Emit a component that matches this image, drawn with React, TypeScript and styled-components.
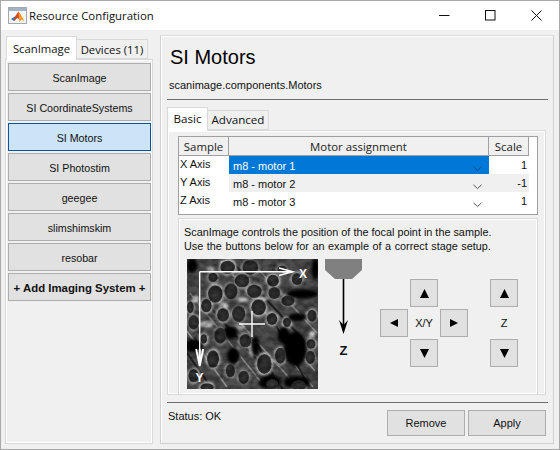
import React from "react";
import styled, { createGlobalStyle } from "styled-components";

const Global = createGlobalStyle`
  html, body { margin: 0; padding: 0; background: #f0f0f0; }
  * { box-sizing: border-box; }
`;

const Window = styled.div`
  width: 560px; height: 450px; display: flex; flex-direction: column;
  border: 1px solid #a9a9a9; background: #f0f0f0; overflow: hidden;
  font-family: "Liberation Sans", Arial, sans-serif; font-size: 11px; color: #000;
`;
const TitleBar = styled.div`
  height: 29px; flex: none; background: #fff; display: flex; align-items: center; padding-left: 7px;
`;
const TitleText = styled.div`
  font-family: "Open Sans", sans-serif; font-size: 11.4px; margin-left: 2px; flex: 1; color: #111;
`;
const WinButton = styled.div`
  width: 46px; height: 29px; display: flex; align-items: center; justify-content: center;
`;
const Main = styled.div`
  flex: 1; display: flex; padding: 5px 5px 5px 4px; min-height: 0; gap: 7px;
`;
const LeftColumn = styled.div`
  width: 148px; flex: none; display: flex; flex-direction: column;
`;
const TabRow = styled.div`
  display: flex; align-items: flex-end; height: 24px; flex: none; padding-left: 1px; position: relative; z-index: 1;
`;
const Tab = styled.div<{ $active?: boolean; $w: number }>`
  width: ${p => p.$w}px; height: ${p => (p.$active ? 24 : 20)}px;
  background: ${p => (p.$active ? "#fff" : "#f0f0f0")};
  border: 1px solid #d9d9d9; border-bottom: ${p => (p.$active ? "none" : "1px solid #d9d9d9")};
  margin-left: ${p => (p.$active ? 0 : -1)}px; margin-bottom: ${p => (p.$active ? -1 : 0)}px;
  z-index: ${p => (p.$active ? 2 : 1)};
  font-family: "Open Sans", sans-serif; font-size: 11.3px; color: #111;
  display: flex; align-items: center; justify-content: center; white-space: nowrap;
`;
const InnerTab = styled(Tab)`
  padding-bottom: 2px; font-size: 11.6px;
`;
const LeftPanel = styled.div`
  flex: 1; border: 1px solid #d9d9d9; box-shadow: inset 0 0 0 1px #fff; padding: 3px 1px 0 2px;
  display: flex; flex-direction: column; gap: 2px;
`;
const NavButton = styled.div<{ $active?: boolean; $bold?: boolean }>`
  height: 28px; flex: none; padding-top: 2px;
  background: ${p => (p.$active ? "#cce4f7" : "#e1e1e1")};
  border: 1px solid ${p => (p.$active ? "#005499" : "#adadad")};
  display: flex; align-items: center; justify-content: center;
  font-weight: ${p => (p.$bold ? 700 : 400)};
  font-size: ${p => (p.$bold ? "11.4px" : "10.7px")};
  color: #111; white-space: nowrap;
`;
const RightPanel = styled.div`
  flex: 1; border: 1px solid #d0d0d0; border-top-color: #dcdcdc; box-shadow: inset 1px 1px 0 #fff;
  padding: 0 5px 0 6px; display: flex; flex-direction: column; min-width: 0;
`;
const Title = styled.div`
  font-family: "Liberation Sans", Arial, sans-serif; font-weight: 400; font-size: 20px; line-height: 24px;
  margin: 9px 0 0 3px; color: #000;
`;
const Subtitle = styled.div`
  font-size: 11px; line-height: 14px; margin: 9px 0 0 2px; color: #111;
`;
const Rule = styled.div`
  height: 1px; background: #6e6e6e; flex: none; margin-top: 7px;
`;
const InnerTabs = styled.div`
  display: flex; align-items: flex-end; height: 24px; margin-top: 6px; flex: none; position: relative; z-index: 1;
`;
const InnerPanel = styled.div`
  height: 265px; flex: none; margin-right: 2px; border: 1px solid #d9d9d9; box-shadow: inset 0 0 0 1px #fff;
  padding: 5px 7px 0 10px; display: flex; flex-direction: column; overflow: hidden;
`;
const TableBox = styled.div`
  height: 79px; flex: none; background: #fff; border: 1px solid #a0a0a0; display: flex; flex-direction: column;
`;
const GridRow = styled.div<{ $alt?: boolean }>`
  display: grid; grid-template-columns: 50px 260px 40px; height: 18px; flex: none;
  background: ${p => (p.$alt ? "#f0f0f0" : "#fff")}; width: 350px;
`;
const HeaderRow = styled(GridRow)`
  height: 19px; background: #f0f0f0;
`;
const HeaderCell = styled.div`
  font-family: "Open Sans", sans-serif; font-size: 11.4px; color: #222; border-right: 1px solid #a0a0a0; border-bottom: 1px solid #a0a0a0;
  display: flex; align-items: center; justify-content: center; background: #f0f0f0; white-space: nowrap;
`;
const AxisCell = styled.div`
  font-size: 11px; padding-left: 1px; line-height: 17px; color: #111;
  background: #fff; white-space: nowrap;
`;
const MotorCell = styled.div<{ $selected?: boolean }>`
  background: ${p => (p.$selected ? "#0078d7" : "transparent")};
  color: ${p => (p.$selected ? "#fff" : "#111")};
  display: flex; align-items: center; justify-content: space-between; padding: 1px 4px 0 4px; font-size: 11px;
`;
const ScaleCell = styled.div`
  text-align: right; padding-right: 2px; line-height: 19px; font-size: 11px; color: #111;
`;
const InfoPanel = styled.div`
  flex: 1; margin-top: 3px; border: 1px solid #d9d9d9; border-bottom: none; box-shadow: inset 1px 1px 0 #fff, inset -1px 0 0 #fff;
  padding: 6px 0 0 5px; min-height: 0; display: flex; flex-direction: column;
`;
const InfoText = styled.div<{ $spread?: number }>`
  font-size: 10.85px; line-height: 14px; color: #111; white-space: nowrap; word-spacing: ${p => p.$spread ?? 0}px;
`;
const Diagram = styled.div`
  display: flex; margin-top: 6px; margin-left: 3px;
`;
const StageColumn = styled.div`
  width: 37px; margin-left: 7px; flex: none; display: flex; flex-direction: column; align-items: center;
`;
const ZMark = styled.div`
  font-weight: 700; font-size: 13px; line-height: 14px; margin-top: 9px; color: #111;
`;
const PadXY = styled.div`
  display: grid; grid-template-columns: repeat(3, 28px); grid-template-rows: repeat(3, 28px); gap: 2px;
  margin-left: 18px; margin-top: 20px; align-self: flex-start;
`;
const PadZ = styled.div`
  display: grid; grid-template-columns: 28px; grid-template-rows: repeat(3, 28px); gap: 2px;
  margin-left: 22px; margin-top: 20px; align-self: flex-start;
`;
const Arrow = styled.div<{ $col?: number; $row?: number }>`
  grid-column: ${p => p.$col ?? 1}; grid-row: ${p => p.$row ?? 1};
  border: 1px solid #adadad; background: #e1e1e1; display: flex; align-items: center; justify-content: center;
`;
const PadLabel = styled.div<{ $col?: number; $row?: number }>`
  grid-column: ${p => p.$col ?? 1}; grid-row: ${p => p.$row ?? 1};
  display: flex; align-items: center; justify-content: center; font-size: 11px; color: #111;
`;
const Footer = styled.div`
  flex: none; margin-top: 7px; border-top: 1px solid #6e6e6e; display: flex; justify-content: space-between; padding-top: 7px;
`;
const Status = styled.div`
  font-size: 11px; line-height: 13px; color: #111; margin-left: 1px;
`;
const FooterButtons = styled.div`
  display: flex; gap: 3px; margin-right: 2px;
`;
const FootButton = styled.div`
  width: 78px; height: 26px; border: 1px solid #adadad; background: #e1e1e1; display: flex; align-items: center; justify-content: center;
  font-size: 11px; color: #111;
`;

const MatlabIcon = () => (
  <svg width="19" height="17" viewBox="0 0 19 17">
    <rect x="0.5" y="0.5" width="18" height="16" fill="#f4f6f8" stroke="#a4a8ae" />
    <rect x="1" y="1" width="17" height="3" fill="#9fb2c6" />
    <path d="M3 12 L7 9.5 L9 11 L6 14 Z" fill="#2f6fb5" />
    <path d="M6 14 L7 9.5 L10.5 4.5 L13 9 L11 12 L9 11 Z" fill="#d8481c" />
    <path d="M10.5 4.5 L13 8 L16.5 14.5 L13.5 12.5 L11.5 15 L11 12 Z" fill="#f2992a" />
  </svg>
);

const Tri = ({ dir }: { dir: "up" | "down" | "left" | "right" }) => {
  const pts = {
    up: "0,9 9,9 4.5,0",
    down: "0,0 9,0 4.5,9",
    left: "8,0 8,8 0,4",
    right: "0,0 0,8 8,4",
  }[dir];
  const w = dir === "up" || dir === "down" ? 9 : 8;
  return (
    <svg width={w} height={w} viewBox={`0 0 ${w} ${w}`}>
      <polygon points={pts} fill="#000" />
    </svg>
  );
};

const Chevron = ({ color }: { color: string }) => (
  <svg width="9" height="6" viewBox="0 0 9 6" style={{ marginTop: 5, marginRight: 3 }}>
    <path d="M0.5 0.8 L4.5 4.6 L8.5 0.8" fill="none" stroke={color} strokeWidth="1" />
  </svg>
);

// cell positions in 3x crop pixels: cx, cy, rx, ry
const CELLS: [number, number, number, number][] = [
  [122,25,22,20],[190,25,24,22],[165,65,22,20],[85,105,22,26],[132,97,20,24],[202,97,22,20],
  [258,65,18,18],[262,102,18,18],[303,125,20,16],[215,145,22,24],[155,165,20,24],[108,168,18,20],
  [58,140,16,20],[20,190,16,22],[10,145,10,18],[78,300,18,26],[175,245,18,20],[280,290,16,24],
  [232,315,22,30],[100,230,18,24],[330,60,16,18],[255,180,16,18],[370,295,14,20],[20,350,16,20],
  [60,385,20,12],[78,55,14,14],[372,255,14,14],[300,190,12,14],[170,355,16,20],[335,380,22,16],
  [255,375,18,14],[130,335,14,20],[375,170,14,18],[50,240,10,14],[285,30,14,10],
];
const DARK: [number, number, number, number][] = [
  [130,220,22,20],[20,260,28,20],[325,270,34,52],[345,105,48,14],[290,230,18,26],[250,370,34,22],[385,30,12,32],[15,20,16,22],
  [330,175,28,12],[140,290,20,26],[205,260,12,30],[330,370,40,20],
];
const BRIGHT: [number, number, number, number][] = [
  [110,140,14,9],[168,122,18,7],[60,195,22,10],[150,205,26,7],[375,230,10,14],[150,290,8,30],[195,275,10,18],[230,120,14,6],[25,120,10,10],[70,30,10,8],
];
const px = (v: number) => v / 3;

const CellImage = () => (
  <svg width="131" height="130" viewBox="0 0 131 130" style={{ display: "block", flex: "none" }}>
    <defs>
      <filter id="noise" x="0" y="0" width="100%" height="100%">
        <feTurbulence type="fractalNoise" baseFrequency="0.12 0.18" numOctaves="3" seed="7" />
        <feColorMatrix values="0 0 0 0 0  0 0 0 0 0  0 0 0 0 0  1.6 0 0 0 -0.55" />
      </filter>
      <filter id="soft"><feGaussianBlur stdDeviation="0.7" /></filter>
      <filter id="ringblur"><feGaussianBlur stdDeviation="0.8" /></filter>
      <filter id="softer"><feGaussianBlur stdDeviation="1.8" /></filter>
      <radialGradient id="nuc">
        <stop offset="0" stopColor="#3c3c3c" />
        <stop offset="0.8" stopColor="#2a2a2a" />
        <stop offset="1" stopColor="#3a3a3a" />
      </radialGradient>
    </defs>
    <rect width="131" height="130" fill="#4e4e4e" />
    <g filter="url(#soft)" fill="none">
      <path d="M34 2 L128 112 M3 34 L78 128 M62 0 L130 74 M0 72 L40 128 M48 58 L112 130 M95 90 L126 128" stroke="#bdbdbd" strokeWidth="1.6" opacity="0.6" />
      <path d="M50 8 L130 96 M16 40 L96 130 M88 64 L122 128 M0 94 L24 128 M70 84 L92 128" stroke="#101010" strokeWidth="2" opacity="0.8" />
    </g>
    <g filter="url(#ringblur)">
      {CELLS.map(([x, y, a, b], i) => (
        <ellipse key={i} cx={px(x)} cy={px(y)} rx={px(a) + 1.8} ry={px(b) + 1.8} fill={i % 3 === 0 ? "#bcbcbc" : i % 3 === 1 ? "#8c8c8c" : "#a2a2a2"} />
      ))}
      {BRIGHT.map(([x, y, a, b], i) => (
        <ellipse key={i} cx={px(x)} cy={px(y)} rx={px(a)} ry={px(b)} fill="#d6d6d6" opacity="0.85" />
      ))}
    </g>
    <g filter="url(#softer)">
      {DARK.map(([x, y, a, b], i) => (
        <ellipse key={i} cx={px(x)} cy={px(y)} rx={px(a)} ry={px(b)} fill="#060606" />
      ))}
    </g>
    <g filter="url(#soft)">
      {CELLS.map(([x, y, a, b], i) => (
        <ellipse key={i} cx={px(x)} cy={px(y)} rx={px(a)} ry={px(b)} fill="url(#nuc)" />
      ))}
    </g>
    <rect width="131" height="130" fill="#000" filter="url(#noise)" opacity="0.55" />
    <g stroke="#fff" fill="none" strokeWidth="1.4">
      <path d="M12.7 12.7 H106" />
      <path d="M92 9 L106 12.7 L92 16.5 M95 12.7 H106" />
      <path d="M12.7 12.7 V104" />
      <path d="M9.2 90 L12.7 107 L16.2 90 M12.7 90 V105" strokeWidth="1.9" />
      <path d="M52 65 H78 M65 52 V78" />
    </g>
    <text x="112" y="19" fontFamily="Liberation Sans, sans-serif" fontWeight="700" fontSize="12" fill="#fff">X</text>
    <text x="8.5" y="123" fontFamily="Liberation Sans, sans-serif" fontWeight="700" fontSize="12" fill="#fff">Y</text>
  </svg>
);

const Stage = () => (
  <svg width="37" height="76" viewBox="0 0 37 76" style={{ display: "block" }}>
    <polygon points="0,0 37,0 37,11 27,20 10,20 0,11" fill="#808080" />
    <path d="M18.5 20 V70" stroke="#000" strokeWidth="1.6" />
    <polygon points="14,61 18.5,66 23,61 18.5,75" fill="#000" />
  </svg>
);

const nav = ["ScanImage", "SI CoordinateSystems", "SI Motors", "SI Photostim", "geegee", "slimshimskim", "resobar"];

export default function App() {
  return (
    <Window>
      <Global />
      <TitleBar>
        <MatlabIcon />
        <TitleText>Resource Configuration</TitleText>
        <WinButton>
          <svg width="11" height="11" viewBox="0 0 11 11"><path d="M0 5.5 H10.5" stroke="#111" /></svg>
        </WinButton>
        <WinButton>
          <svg width="11" height="11" viewBox="0 0 11 11"><rect x="0.5" y="0.5" width="9.5" height="9.5" fill="none" stroke="#111" /></svg>
        </WinButton>
        <WinButton>
          <svg width="11" height="11" viewBox="0 0 11 11"><path d="M0.5 0.5 L10.5 10.5 M10.5 0.5 L0.5 10.5" stroke="#111" /></svg>
        </WinButton>
      </TitleBar>
      <Main>
        <LeftColumn>
          <TabRow>
            <Tab $active $w={71}>ScanImage</Tab>
            <Tab $w={72}>Devices (11)</Tab>
          </TabRow>
          <LeftPanel>
            {nav.map(n => (
              <NavButton key={n} $active={n === "SI Motors"}>{n}</NavButton>
            ))}
            <NavButton $bold>+ Add Imaging System +</NavButton>
          </LeftPanel>
        </LeftColumn>
        <RightPanel>
          <Title>SI Motors</Title>
          <Subtitle>scanimage.components.Motors</Subtitle>
          <Rule />
          <InnerTabs>
            <InnerTab $active $w={41}>Basic</InnerTab>
            <InnerTab $w={62}>Advanced</InnerTab>
          </InnerTabs>
          <InnerPanel>
            <TableBox>
              <HeaderRow>
                <HeaderCell>Sample</HeaderCell>
                <HeaderCell>Motor assignment</HeaderCell>
                <HeaderCell>Scale</HeaderCell>
              </HeaderRow>
              <GridRow>
                <AxisCell>X Axis</AxisCell>
                <MotorCell $selected>m8 - motor 1<Chevron color="#0a4a80" /></MotorCell>
                <ScaleCell>1</ScaleCell>
              </GridRow>
              <GridRow $alt>
                <AxisCell>Y Axis</AxisCell>
                <MotorCell>m8 - motor 2<Chevron color="#555" /></MotorCell>
                <ScaleCell>-1</ScaleCell>
              </GridRow>
              <GridRow>
                <AxisCell>Z Axis</AxisCell>
                <MotorCell>m8 - motor 3<Chevron color="#555" /></MotorCell>
                <ScaleCell>1</ScaleCell>
              </GridRow>
            </TableBox>
            <InfoPanel>
              <InfoText>ScanImage controls the position of the focal point in the sample.</InfoText>
              <InfoText $spread={0.5}>Use the buttons below for an example of a correct stage setup.</InfoText>
              <Diagram>
                <CellImage />
                <StageColumn>
                  <Stage />
                  <ZMark>Z</ZMark>
                </StageColumn>
                <PadXY>
                  <Arrow $col={2} $row={1}><Tri dir="up" /></Arrow>
                  <Arrow $col={1} $row={2}><Tri dir="left" /></Arrow>
                  <PadLabel $col={2} $row={2}>X/Y</PadLabel>
                  <Arrow $col={3} $row={2}><Tri dir="right" /></Arrow>
                  <Arrow $col={2} $row={3}><Tri dir="down" /></Arrow>
                </PadXY>
                <PadZ>
                  <Arrow $row={1}><Tri dir="up" /></Arrow>
                  <PadLabel $row={2}>Z</PadLabel>
                  <Arrow $row={3}><Tri dir="down" /></Arrow>
                </PadZ>
              </Diagram>
            </InfoPanel>
          </InnerPanel>
          <Footer>
            <Status>Status: OK</Status>
            <FooterButtons>
              <FootButton>Remove</FootButton>
              <FootButton>Apply</FootButton>
            </FooterButtons>
          </Footer>
        </RightPanel>
      </Main>
    </Window>
  );
}
